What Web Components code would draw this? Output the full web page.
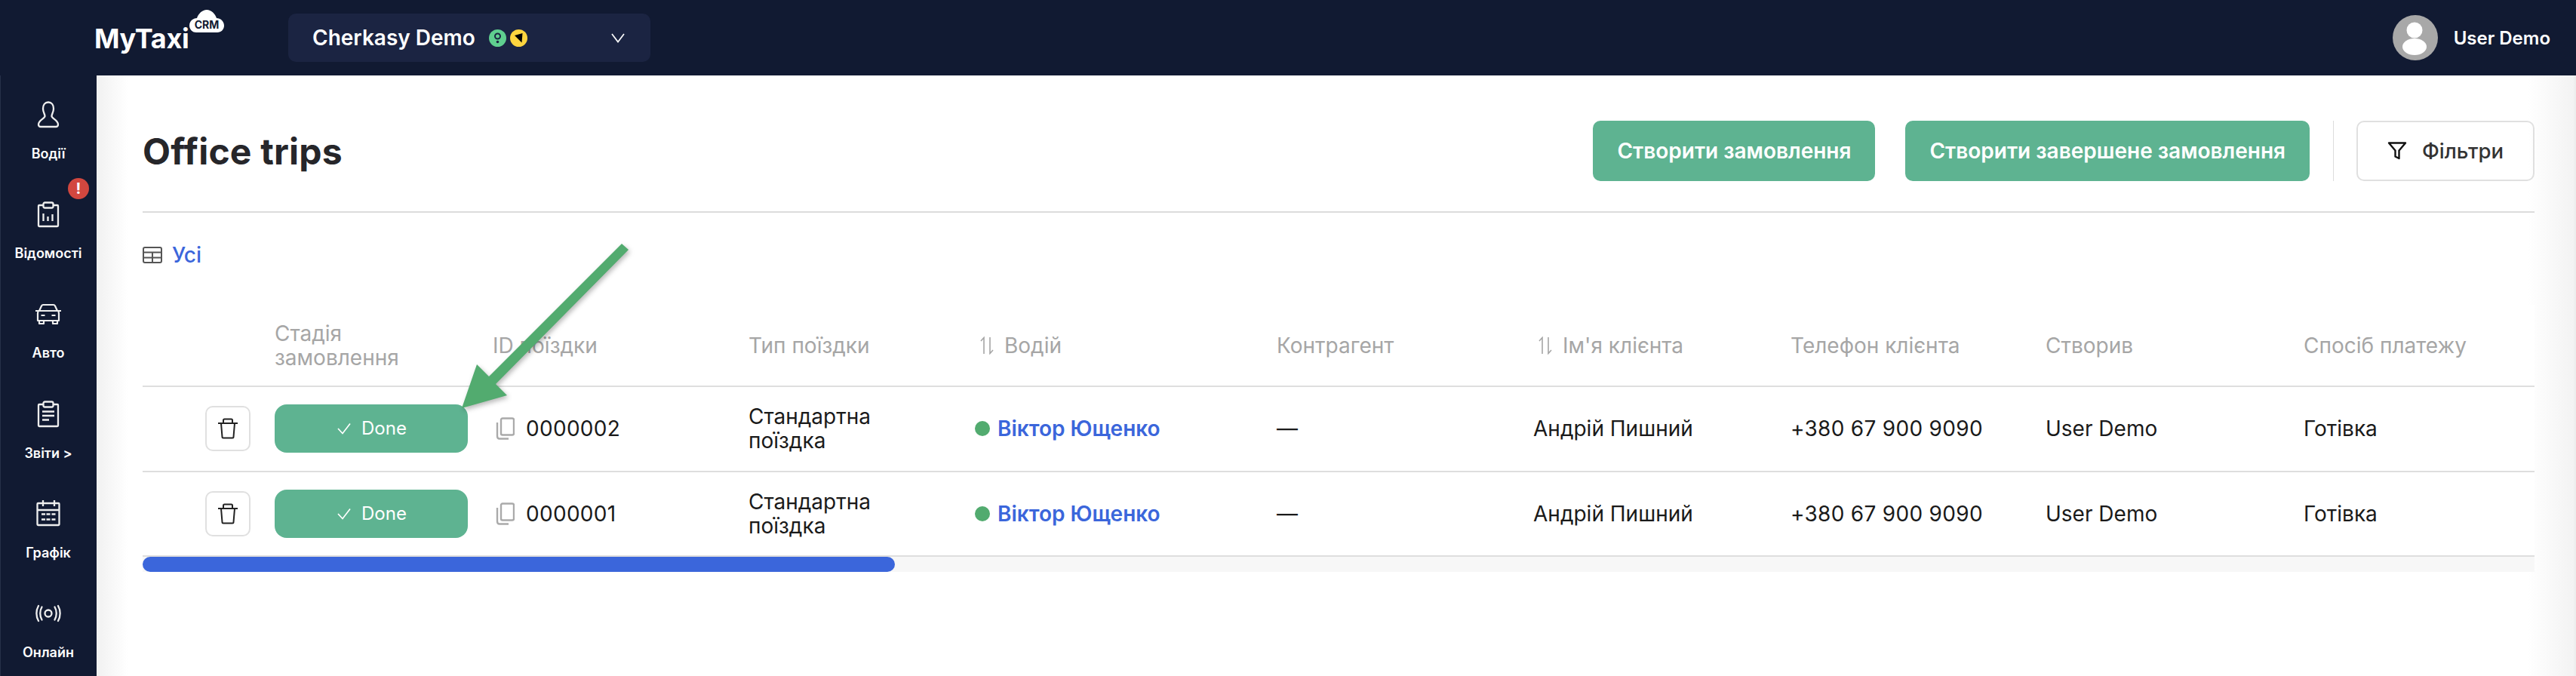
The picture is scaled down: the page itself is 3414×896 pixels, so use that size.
<!DOCTYPE html>
<html lang="uk">
<head>
<meta charset="utf-8">
<title>Office trips</title>
<style>
    html, body { margin: 0; height: 100%; overflow: hidden; }
    body { font-family: Inter, "Noto Sans", sans-serif; background: #fff; color: #1a1a1a; }
    svg { display: block; }
</style>
</head>
<body>
<app-shell>
    <top-bar slot="top"></top-bar>
    <side-nav slot="side">
        <nav-item label="Водії">
            <svg slot="icon" width="36" height="36" fill="none" stroke="#eee" stroke-width="2.3" stroke-linejoin="round"><path d="M18 1.500C13.500 1.500 11 5 11 10c0 5 2.500 7 2.500 10 0 3-8.500 5-8.500 11 0 2 1 3 3 3h20c2 0 3-1 3-3 0-6-8.500-8-8.500-11 0-3 2.500-5 2.500-10 0-5-2.500-8.500-7-8.500z"/></svg>
        </nav-item>
        <nav-item label="Відомості" alert>
            <svg slot="icon" width="36" height="36" fill="none" stroke="#eee" stroke-width="2.300"><rect x="5" y="6" width="26" height="28" rx="1"/><rect x="11.500" y="2.500" width="13" height="7" rx="2" fill="#111a32"/><path d="M11.500 17v10M17.500 21v6M23.500 18v9"/></svg>
        </nav-item>
        <nav-item label="Авто">
            <svg slot="icon" width="36" height="36" fill="none" stroke="#eee" stroke-width="2.200" stroke-linejoin="round"><path d="M6 14l3-6.500c.5-1 1.200-1.500 2.200-1.500h13.600c1 0 1.700.5 2.200 1.500L30 14"/><path d="M1 14h34M4.500 14.500l-.5 3V27h28v-9.500l-.5-3M6 27v4h6v-4M24 27v4h6v-4"/><path d="M8.500 20h5M22.500 20h5"/></svg>
        </nav-item>
        <nav-item label="Звіти &gt;">
            <svg slot="icon" width="36" height="36" fill="none" stroke="#eee" stroke-width="2.300"><rect x="5" y="5" width="26" height="29" rx="1"/><rect x="11.500" y="1.500" width="13" height="7" rx="2" fill="#111a32"/><path d="M10 14.500h16M10 20h16M10 25.500h9"/></svg>
        </nav-item>
        <nav-item label="Графік">
            <svg slot="icon" width="36" height="36" fill="none" stroke="#eee" stroke-width="2.300"><rect x="3.500" y="4" width="29" height="29" rx="1"/><path d="M3.500 13h29M11 0v8M26 0v8"/><path d="M9 18.500h5M15.500 18.500h5M22.500 18.500h5M9 25.500h5M15.500 25.500h5M22.500 25.500h5"/></svg>
        </nav-item>
        <nav-item label="Онлайн">
            <svg slot="icon" width="36" height="36" fill="none" stroke="#eee" stroke-width="2.300" stroke-linecap="round"><circle cx="18" cy="18" r="4.500"/><path d="M9.500 9.500c-3 5-3 12 0 17M26.500 9.500c3 5 3 12 0 17M5 8c-3.500 6-3.500 14 0 20M31 8c3.500 6 3.500 14 0 20"/></svg>
        </nav-item>
    </side-nav>

    <page-head title="Office trips">
        <action-button kind="primary">Створити замовлення</action-button>
        <action-button kind="primary">Створити завершене замовлення</action-button>
        <i class="split" slot="after"></i>
        <action-button kind="outline" slot="after">
            <svg slot="icon" width="26" height="26" fill="none" stroke="#111" stroke-width="2.400" stroke-linejoin="round"><path d="M2 2.500h22l-8.500 10v10.500l-5-2.500v-8z"/></svg>
            Фільтри
        </action-button>
    </page-head>

    <view-tab>Усі</view-tab>

    <trips-table>
        <trip-row head>
            <trip-cell></trip-cell>
            <trip-cell>Стадія<br>замовлення</trip-cell>
            <trip-cell>ID поїздки</trip-cell>
            <trip-cell>Тип поїздки</trip-cell>
            <trip-cell sort>Водій</trip-cell>
            <trip-cell>Контрагент</trip-cell>
            <trip-cell sort>Ім'я клієнта</trip-cell>
            <trip-cell>Телефон клієнта</trip-cell>
            <trip-cell>Створив</trip-cell>
            <trip-cell>Спосіб платежу</trip-cell>
        </trip-row>
        <trip-row>
            <trip-cell end><delete-button></delete-button></trip-cell>
            <trip-cell><stage-badge>Done</stage-badge></trip-cell>
            <trip-cell digits><trip-id>0000002</trip-id></trip-cell>
            <trip-cell>Стандартна<br>поїздка</trip-cell>
            <trip-cell><driver-link>Віктор Ющенко</driver-link></trip-cell>
            <trip-cell>—</trip-cell>
            <trip-cell>Андрій Пишний</trip-cell>
            <trip-cell digits>+380 67 900 9090</trip-cell>
            <trip-cell>User Demo</trip-cell>
            <trip-cell>Готівка</trip-cell>
        </trip-row>
        <trip-row>
            <trip-cell end><delete-button></delete-button></trip-cell>
            <trip-cell><stage-badge>Done</stage-badge></trip-cell>
            <trip-cell digits><trip-id>0000001</trip-id></trip-cell>
            <trip-cell>Стандартна<br>поїздка</trip-cell>
            <trip-cell><driver-link>Віктор Ющенко</driver-link></trip-cell>
            <trip-cell>—</trip-cell>
            <trip-cell>Андрій Пишний</trip-cell>
            <trip-cell digits>+380 67 900 9090</trip-cell>
            <trip-cell>User Demo</trip-cell>
            <trip-cell>Готівка</trip-cell>
        </trip-row>
    </trips-table>

    <note-arrow slot="overlay"></note-arrow>
</app-shell>

<script>
    // Small helper so every element below only has to give its markup
    class ShadowElement extends HTMLElement {
        constructor() {
            super();
            this.attachShadow({ mode: 'open' });
        }

        connectedCallback() {
            this.shadowRoot.innerHTML = this.markup();
        }
    }

    class AppShell extends ShadowElement {
        markup() {
            return `
                <style>
                    :host { display: grid; grid-template: 100px 796px / 128px 1fr; height: 896px; position: relative; }
                    ::slotted([slot="top"]) { grid-column: 1 / 3; }
                    main {
                        padding: 60px 55px 0 61px;
                        overflow: hidden;
                        background: linear-gradient(to right, #f1f1f1, #fff 42px, #fff calc(100% - 64px), #f3f3f3 calc(100% - 4px), #ececec);
                    }
                </style>
                <slot name="top"></slot>
                <slot name="side"></slot>
                <main><slot></slot></main>
                <slot name="overlay"></slot>
            `;
        }
    }

    class TopBar extends ShadowElement {
        markup() {
            return `
                <style>
                    :host { display: flex; align-items: center; background: #111a32; color: #fff; padding: 0 34px 0 125px; }
                    .logo { position: relative; font-size: 36px; font-weight: 700; letter-spacing: -.3px; width: 257px; padding-top: 2px; }
                    .cloud { position: absolute; left: 126px; top: -14px; width: 46px; height: 30px; }
                    .cloud svg { display: block; }
                    .cloud span { position: absolute; inset: 9px 0 0; text-align: center; font-size: 14px; line-height: 22px; letter-spacing: 0; color: #111a32; font-weight: 700; }
                    .city { display: flex; align-items: center; width: 480px; height: 64px; box-sizing: border-box; padding: 0 34px 0 32px; background: #1b2442; border-radius: 10px; font-size: 28px; font-weight: 600; }
                    .city b { font: inherit; margin-right: 18px; }
                    .city svg:nth-of-type(2) { margin-left: 5px; }
                    .city svg:last-child { margin-left: auto; }
                    .user { display: flex; align-items: center; gap: 21px; margin-left: auto; font-size: 24px; font-weight: 600; }
                </style>
                <div class="logo">MyTaxi
                    <div class="cloud">
                        <svg width="46" height="30"><path d="M9 30C4 30 0 26 0 21c0-6 5-10 10-10C12 5 17 0 23 0s11 5 13 11c5 0 10 4 10 10 0 5-4 9-9 9z" fill="#fff"/></svg>
                        <span>CRM</span>
                    </div>
                </div>
                <div class="city">
                    <b>Cherkasy Demo</b>
                    <svg width="23" height="23"><circle cx="11.500" cy="11.500" r="11.500" fill="#5fcf8f"/><circle cx="11.500" cy="9" r="3.500" fill="none" stroke="#1b2442" stroke-width="2"/><circle cx="11.500" cy="16.500" r="1.800" fill="#1b2442"/></svg>
                    <svg width="23" height="23"><circle cx="11.500" cy="11.500" r="11.500" fill="#ffd53f"/><path d="M6 8l10.500-3-1 12.500z" fill="#000"/></svg>
                    <svg width="18" height="14" fill="none" stroke="#fff" stroke-width="1.700"><path d="M1 2l8 10.500L17 2"/></svg>
                </div>
                <div class="user">
                    <svg width="60" height="60"><circle cx="30" cy="30" r="30" fill="#a8a8a8"/><circle cx="29" cy="20" r="10.500" fill="#fff"/><ellipse cx="29" cy="42" rx="16" ry="11" fill="#fff"/></svg>
                    User Demo
                </div>
            `;
        }
    }

    class SideNav extends ShadowElement {
        markup() {
            return `
                <style>
                    :host { display: block; background: #111a32; padding-top: 34px; border-left: 1px solid #263049; overflow: hidden; }
                </style>
                <slot></slot>
            `;
        }
    }

    class NavItem extends ShadowElement {
        markup() {
            const badge = this.hasAttribute('alert') ? '<i>!</i>' : '';
            return `
                <style>
                    :host { display: flex; flex-direction: column; align-items: center; height: 132.200px; margin-left: -1px; position: relative; color: #fff; }
                    span { margin-top: 22px; font-size: 18px; line-height: 24px; font-weight: 600; white-space: nowrap; }
                    i { position: absolute; left: 90px; top: -30px; width: 28px; height: 28px; border-radius: 50%; background: #d2473f; font: 700 20px/28px Inter, sans-serif; text-align: center; }
                </style>
                ${badge}
                <slot name="icon"></slot>
                <span>${this.getAttribute('label')}</span>
            `;
        }
    }

    class PageHead extends ShadowElement {
        markup() {
            return `
                <style>
                    :host { display: flex; align-items: center; height: 80px; padding-bottom: 40px; border-bottom: 2px solid #dcdcdc; }
                    h1 { margin: 0 auto 0 0; font-size: 48px; font-weight: 700; color: #26262a; letter-spacing: .2px; }
                    .main { display: flex; gap: 40px; }
                    .after { display: flex; margin-left: 31px; }
                    ::slotted(.split) { display: block; width: 1px; height: 80px; background: #dcdcdc; margin-right: 30px; }
                </style>
                <h1>${this.getAttribute('title')}</h1>
                <div class="main"><slot></slot></div>
                <div class="after"><slot name="after"></slot></div>
            `;
        }
    }

    class ActionButton extends ShadowElement {
        markup() {
            const outline = this.getAttribute('kind') === 'outline';
            return `
                <style>
                    :host { display: flex; align-items: center; justify-content: center; box-sizing: border-box; height: 80px; font-size: 28px; border-radius: 10px;
                        ${outline
                            ? 'width: 236px; gap: 20px; border: 2px solid #e0e0e0; color: #333; font-weight: 500; font-size: 27.500px;'
                            : 'padding: 0 32px; background: #5eb391; color: #fff; font-weight: 600;'}
                    }
                </style>
                <slot name="icon"></slot>
                <slot></slot>
            `;
        }
    }

    class ViewTab extends ShadowElement {
        markup() {
            return `
                <style>
                    :host { display: flex; align-items: center; gap: 13px; height: 122px; padding-bottom: 10px; box-sizing: border-box; font-size: 28px; color: #3b66db; font-weight: 500; }
                </style>
                <svg width="26" height="22" fill="none" stroke="#555" stroke-width="2"><rect x="1" y="1" width="24" height="20" rx="2"/><path d="M1 7.500h24M1 14.500h24M13 7.500v13.500"/></svg>
                <slot></slot>
            `;
        }
    }

    class TripsTable extends ShadowElement {
        markup() {
            return `
                <style>
                    :host { display: block; --trip-cols: 159px 289px 339px 300px 400px 340px 341px 338px 342px 322px; background: #fff; }
                    .track { height: 20px; background: #f7f7f7; }
                    .thumb { width: 997px; height: 20px; border-radius: 10px; background: #3b66db; }
                </style>
                <slot></slot>
                <div class="track"><div class="thumb"></div></div>
            `;
        }
    }

    class TripRow extends ShadowElement {
        markup() {
            const head = this.hasAttribute('head');
            return `
                <style>
                    :host { display: grid; grid-template-columns: var(--trip-cols); box-sizing: border-box; border-bottom: 2px solid #dedede;
                        height: ${head ? 109 : 112.500}px; font-size: 28px; color: ${head ? '#a6a6a6' : '#1a1a1a'}; }
                </style>
                <slot></slot>
            `;
        }
    }

    class TripCell extends ShadowElement {
        markup() {
            const sort = this.hasAttribute('sort')
                ? '<svg width="20" height="24" fill="none" stroke="#a6a6a6" stroke-width="1.600"><path d="M6 23V1.500L2 6M14 1v21.500L18 18"/></svg>'
                : '';
            return `
                <style>
                    :host { display: flex; align-items: center; gap: 13px; padding: 0 16px; line-height: 32px; white-space: nowrap;
                        ${this.hasAttribute('end') ? 'justify-content: flex-end;' : ''}
                        ${this.hasAttribute('digits') ? 'letter-spacing: .3px;' : ''} }
                    svg { margin-left: 6px; }
                </style>
                ${sort}
                <div><slot></slot></div>
            `;
        }
    }

    class DeleteButton extends ShadowElement {
        markup() {
            return `
                <style>
                    :host { display: flex; align-items: center; justify-content: center; box-sizing: border-box; width: 60px; height: 60px; border: 2px solid #e0e0e0; border-radius: 10px; }
                </style>
                <svg width="28" height="28" fill="none" stroke="#222" stroke-width="2" stroke-linejoin="round"><path d="M1 7h26M5 7l1.500 18c0 1 .5 1.500 1.500 1.500h12c1 0 1.500-.5 1.500-1.500L23 7M8 7V3c0-1 .5-1.500 1.500-1.500h9c1 0 1.500.5 1.500 1.500v4"/></svg>
            `;
        }
    }

    class StageBadge extends ShadowElement {
        markup() {
            return `
                <style>
                    :host { display: flex; align-items: center; justify-content: center; gap: 14px; width: 256px; height: 64px; padding-left: 2px; box-sizing: border-box; border-radius: 16px; background: #5eb391; color: #fff; font-size: 24px; }
                </style>
                <svg width="18" height="16" fill="none" stroke="#fff" stroke-width="1.700"><path d="M1 8l6 6.500L17 1.500"/></svg>
                <slot></slot>
            `;
        }
    }

    class TripId extends ShadowElement {
        markup() {
            return `
                <style>
                    :host { display: flex; align-items: center; gap: 15px; padding-left: 4px; }
                </style>
                <svg width="25" height="30" fill="none" stroke="#aaa" stroke-width="2.400" stroke-linejoin="round"><rect x="7" y="1.500" width="17" height="22" rx="2"/><path d="M2 7v18c0 2 1 3.500 3 3.500h12"/></svg>
                <slot></slot>
            `;
        }
    }

    class DriverLink extends ShadowElement {
        markup() {
            return `
                <style>
                    :host { display: flex; align-items: center; gap: 10px; color: #3b66db; font-weight: 600; }
                    i { width: 20px; height: 20px; border-radius: 50%; background: #52ab6f; }
                </style>
                <i></i>
                <slot></slot>
            `;
        }
    }

    // Annotation drawn over the page, so it keeps its own place on the canvas
    class NoteArrow extends ShadowElement {
        markup() {
            return `
                <style>
                    :host { position: absolute; left: 600px; top: 310px; width: 250px; height: 250px; pointer-events: none; }
                    svg { filter: drop-shadow(2px 3px 3px rgba(0, 0, 0, .28)); }
                </style>
                <svg width="250" height="250"><path d="M224 13L233 21 57 199 72 214 12 231 32 173 48 189z" fill="#52ab6f"/></svg>
            `;
        }
    }

    customElements.define('app-shell', AppShell);
    customElements.define('top-bar', TopBar);
    customElements.define('side-nav', SideNav);
    customElements.define('nav-item', NavItem);
    customElements.define('page-head', PageHead);
    customElements.define('action-button', ActionButton);
    customElements.define('view-tab', ViewTab);
    customElements.define('trips-table', TripsTable);
    customElements.define('trip-row', TripRow);
    customElements.define('trip-cell', TripCell);
    customElements.define('delete-button', DeleteButton);
    customElements.define('stage-badge', StageBadge);
    customElements.define('trip-id', TripId);
    customElements.define('driver-link', DriverLink);
    customElements.define('note-arrow', NoteArrow);
</script>
</body>
</html>
